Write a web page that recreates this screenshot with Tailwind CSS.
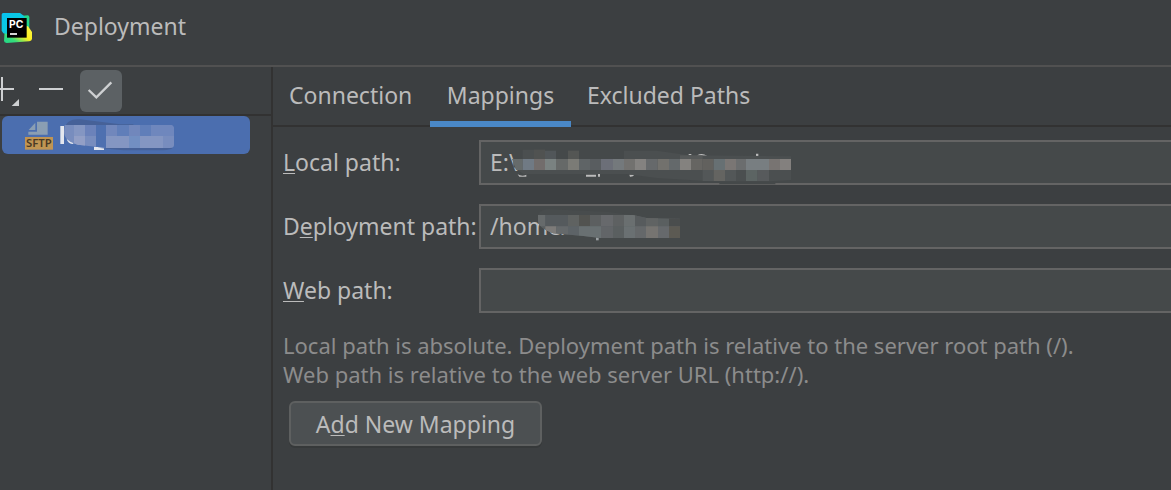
<!DOCTYPE html>
<html lang="en">
<head>
<meta charset="utf-8">
<title>Deployment</title>
<script src="https://cdn.jsdelivr.net/npm/@tailwindcss/browser@4"></script>
</head>
<body class="flex min-h-screen flex-col overflow-x-hidden bg-[#3c3f41] font-['Noto_Sans','Open_Sans',sans-serif] text-[23px] leading-7 text-[#bbbbbb]">
  <header class="flex h-[67px] items-start gap-[22px] border-b-2 border-[#515151] pt-3">
    <svg class="h-8 w-8 shrink-0" viewBox="0 0 96 96" aria-hidden="true">
      <defs>
        <linearGradient id="g1" x1="0" y1="0" x2="1" y2="1"><stop offset="0" stop-color="#07c3f2"/><stop offset=".5" stop-color="#0bc9e0"/><stop offset="1" stop-color="#21d789"/></linearGradient>
        <linearGradient id="g2" x1="0" y1="1" x2="1" y2="0"><stop offset="0" stop-color="#21d789"/><stop offset=".25" stop-color="#35dd7c"/><stop offset=".55" stop-color="#fcf020"/><stop offset="1" stop-color="#fcf84a"/></linearGradient>
      </defs>
      <path d="M58 12L84 10Q88 11 88 16V50L60 60Z" fill="#21d789"/>
      <path d="M14 56L12 86Q12 92 20 93L88 88Q95 87 96 81V60L84 43L40 40Z" fill="url(#g2)"/>
      <path d="M10 3H60L72 12L80 30L50 60L22 66L10 64L5 56V8Q5 3 10 3Z" fill="url(#g1)"/>
      <path d="M21 18H80V77H21Z" fill="#000"/>
      <path d="M30 66H51" stroke="#fff" stroke-width="5"/>
      <text x="27" y="48" fill="#fff" font-family="Inter, sans-serif" font-weight="700" font-size="31">PC</text>
    </svg>
    <h1>Deployment</h1>
  </header>
  <div class="flex flex-1">
    <aside class="w-[273px] shrink-0 border-r-2 border-[#323232]">
      <div class="flex h-[49px] items-start border-b-2 border-[#323232] pt-[3px]" role="toolbar">
        <button class="h-[42px] w-8" aria-label="Add">
          <svg class="h-[42px] w-8" viewBox="0 0 96 126" aria-hidden="true"><path d="M0 57H42M6 21V93" stroke="#ced0d2" stroke-width="6"/><path d="M57 87V108H35Z" fill="#ced0d2"/></svg>
        </button>
        <button class="h-[42px] w-12" aria-label="Remove">
          <svg class="h-[42px] w-12" viewBox="0 0 144 126" aria-hidden="true"><path d="M21 57H93" stroke="#ced0d2" stroke-width="6"/></svg>
        </button>
        <button class="h-[42px] w-[42px] rounded-md bg-[#5c6164]" aria-label="Use as default">
          <svg class="h-[42px] w-[42px]" viewBox="0 0 126 126" aria-hidden="true"><path d="M26 60L49 82L94 37" fill="none" stroke="#ced0d2" stroke-width="7"/></svg>
        </button>
      </div>
      <button class="relative ml-[2px] flex h-[38px] w-[248px] items-center rounded-md bg-[#4b6eaf] pl-[22px] text-left text-white" aria-label="Selected SFTP server">
        <svg class="h-[30px] w-[30px]" viewBox="0 0 90 90" aria-hidden="true">
          <path d="M39 5H71V44H13V35H39Z" fill="#8a9eb3"/><path d="M34 8V30H14Z" fill="#8a9eb3"/>
          <path d="M3 51H87V89H3Z" fill="#c09553"/>
          <text x="6" y="82" font-family="Noto Sans, sans-serif" font-weight="600" font-size="34" fill="#4a3a25">SFTP</text>
        </svg>
        <svg class="absolute top-0 left-0 h-[38px] w-[248px]" viewBox="6 168 744 114" aria-hidden="true">
          <path d="M181 198H192V252H181ZM200 237Q204 252 220 252V242ZM282 260H312V270H282Z" fill="#e4e7ee"/>
          <path d="M194 200Q205 174 240 178L360 193H400V202H200ZM300 264H518Q510 270 490 271H370Z" fill="#466198"/>
          <clipPath id="m0"><path d="M194 195H510Q522 195 522 208V255Q522 264 510 264H318L240 255Q192 245 192 215Z"/></clipPath>
          <g clip-path="url(#m0)">
            <path d="M190 195h332v70H190z" fill="#788dbe"/>
            <path d="M222 195h33v33h-33z" fill="#8496c2"/><path d="M255 195h33v33h-33z" fill="#6b82ba"/><path d="M288 195h30v70h-30z" fill="#4e70b0"/>
            <path d="M318 195h33v33h-33zM387 195h33v33h-33z" fill="#7187bc"/><path d="M351 195h36v33h-36zM420 195h33v33h-33z" fill="#607eb9"/><path d="M453 195h69v33h-69z" fill="#6f87bd"/>
            <path d="M222 228h33v37h-33z" fill="#929fc6"/><path d="M318 228h69v37h-69zM420 228h69v37h-69z" fill="#8496c2"/><path d="M387 228h33v37h-33z" fill="#728fc2"/>
          </g>
        </svg>
      </button>
    </aside>
    <main class="min-w-0 flex-1">
      <nav class="flex h-[60px] border-b-2 border-[#323232]" role="tablist">
        <button class="w-[157px] px-4 pb-[2px] text-left whitespace-nowrap" role="tab" aria-selected="false">Connection</button>
        <button class="relative w-[141px] pb-[2px] text-center after:absolute after:inset-x-0 after:-bottom-[2px] after:h-[6px] after:bg-[#4a88c7]" role="tab" aria-selected="true">Mappings</button>
        <button class="px-4 pb-[2px] whitespace-nowrap" role="tab" aria-selected="false">Excluded Paths</button>
      </nav>
      <form class="pt-[13px] pl-[10px]">
        <div class="grid grid-cols-[196px_1fr] items-center gap-y-[19px]">
          <label for="local" class="pb-[2px] whitespace-nowrap"><span class="underline decoration-1 underline-offset-2">L</span>ocal path:</label>
          <div class="relative -mr-1">
            <input id="local" value="E:\" class="block h-[45px] w-full border-2 border-[#646464] bg-[#45494a] px-[9px] pb-[2px] outline-none">
            <svg class="pointer-events-none absolute top-0 left-0 h-[45px] w-[320px]" viewBox="27 30 960 135" aria-hidden="true">
              <path d="M143 133Q156 141 169 134V140H148ZM348 134H378V140H348ZM384 132H390V140H384ZM478 134H493Q489 141 480 140ZM656 72H664V76H656ZM682 76Q695 67 711 77V80H682ZM858 71H865V78H858Z" fill="#bbb"/>
              <path d="M158 59H225V87H158ZM294 62H327V87H294ZM462 62H560L656 76L963 79V150L900 154H720L560 144L470 132H160L130 110V87H462Z" fill="#4b4f50"/>
              <path d="M192 59h33v28h-33z" fill="#505251"/><path d="M225 62h33v25h-33z" fill="#515659"/><path d="M294 62h33v25h-33z" fill="#545654"/><path d="M630 76h68v11h-68z" fill="#565959"/>
              <path d="M126 87H158V120H138Z" fill="#666b6b"/><path d="M158 87h34v33h-34z" fill="#707a84"/><path d="M192 87h33v33h-33z" fill="#726d6c"/><path d="M225 87h33v33h-33z" fill="#7a8281"/><path d="M258 87h36v33h-36z" fill="#666968"/><path d="M294 87h33v33h-33z" fill="#7b7b76"/>
              <path d="M327 87h33v33h-33z" fill="#5f6466"/><path d="M360 87h33v33h-33z" fill="#595d60"/><path d="M393 87h36v33h-36z" fill="#6c6f78"/><path d="M429 87h33v33h-33z" fill="#74797c"/><path d="M462 87h33v33h-33z" fill="#72716f"/><path d="M495 87h33v33h-33z" fill="#848280"/>
              <path d="M528 87h35v33h-35z" fill="#66696b"/><path d="M563 87h34v33h-34z" fill="#72716d"/><path d="M597 87h33v33h-33z" fill="#64696b"/><path d="M630 87h33v33h-33z" fill="#84827f"/><path d="M663 87h35v33h-35z" fill="#666562"/><path d="M698 87h33v33h-33z" fill="#62615e"/>
              <path d="M731 87h34v33h-34z" fill="#677073"/><path d="M765 87h33v33h-33z" fill="#7a7674"/><path d="M798 87h30v33h-30z" fill="#6b6d6e"/><path d="M828 87h69v33h-69z" fill="#787e81"/><path d="M897 87h33v33h-33z" fill="#787472"/><path d="M930 87h33v33h-33z" fill="#83807e"/>
              <path d="M698 120h33v33h-33zM765 120h33v33h-33z" fill="#535758"/><path d="M731 120h34v33h-34z" fill="#646461"/><path d="M828 120h35v33h-35z" fill="#5c6463"/><path d="M863 120h34v33h-34z" fill="#575a5c"/>
              <path d="M748 159H916V163H748Z" fill="#45494a"/>
            </svg>
          </div>
          <label for="deploy" class="pb-[2px] whitespace-nowrap">D<span class="underline decoration-1 underline-offset-2">e</span>ployment path:</label>
          <div class="relative -mr-1">
            <input id="deploy" value="/home/" class="block h-[45px] w-full border-2 border-[#646464] bg-[#45494a] px-[9px] pb-[2px] outline-none">
            <svg class="pointer-events-none absolute top-0 left-0 h-[45px] w-[220px]" viewBox="27 27 660 135" aria-hidden="true">
              <path d="M378 122H386V136H378Z" fill="#9a9fa2"/>
              <path d="M205 58Q212 42 240 43L410 50L500 62V80H205Z" fill="#484c4d"/>
              <clipPath id="m2"><path d="M204 60H490L530 69L630 71V129H390L340 123L250 115Q204 100 204 75Z"/></clipPath>
              <g clip-path="url(#m2)">
                <path d="M200 58h430v72H200z" fill="#5a5f60"/>
                <path d="M200 58h26v36h-26z" fill="#666a6b"/><path d="M226 58h68v36h-68z" fill="#555a5d"/><path d="M294 58h33v36h-33z" fill="#5f6261"/><path d="M327 58h33v36h-33z" fill="#525350"/><path d="M360 58h33v36h-33z" fill="#5c5f60"/><path d="M393 58h36v36h-36z" fill="#67696c"/><path d="M429 58h33v36h-33z" fill="#5e6162"/><path d="M462 58h33v36h-33z" fill="#6a6f70"/><path d="M495 58h33v36h-33z" fill="#575b5d"/><path d="M528 58h36v36h-36z" fill="#606363"/><path d="M597 58h33v36h-33z" fill="#4a4d4d"/>
                <path d="M226 94h33v36h-33z" fill="#7d7b79"/><path d="M259 94h35v36h-35z" fill="#65696b"/><path d="M294 94h33v36h-33z" fill="#5d6367"/><path d="M327 94h66v36h-66z" fill="#697072"/><path d="M393 94h36v36h-36z" fill="#626568"/><path d="M462 94h33v36h-33z" fill="#6a7072"/><path d="M495 94h33v36h-33z" fill="#65686a"/><path d="M528 94h36v36h-36z" fill="#767471"/><path d="M564 94h33v36h-33z" fill="#66696c"/><path d="M597 94h33v36h-33z" fill="#5c5a53"/>
              </g>
            </svg>
          </div>
          <label for="web" class="pb-[2px] whitespace-nowrap"><span class="underline decoration-1 underline-offset-2">W</span>eb path:</label>
          <div class="-mr-1">
            <input id="web" value="" class="block h-[45px] w-full border-2 border-[#646464] bg-[#45494a] px-[9px] pb-[2px] outline-none">
          </div>
        </div>
        <p class="pt-[18px] text-[22px] leading-[29px] text-[#8c8c8c]">Local path is absolute. Deployment path is relative to the server root path (/).<br>Web path is relative to the web server URL (http://).</p>
        <button type="button" class="mt-3 ml-[6px] h-[45px] w-[253px] rounded-md border-2 border-[#5e6060] bg-[#4c5052] shadow-[0_2px_0_#36393a]">A<span class="underline decoration-1 underline-offset-2">d</span>d New Mapping</button>
      </form>
    </main>
  </div>
</body>
</html>
